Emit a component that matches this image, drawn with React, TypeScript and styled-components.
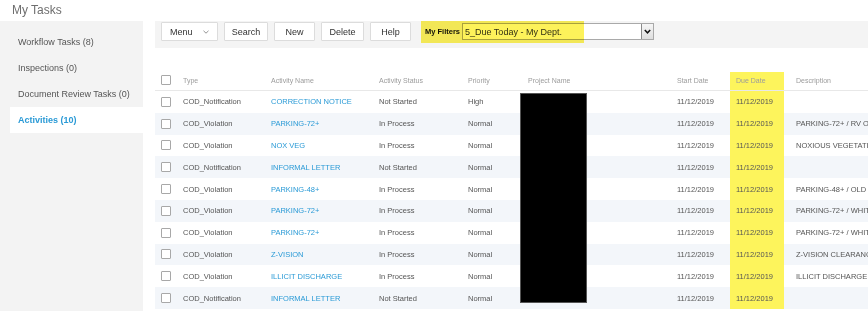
import React from "react";
import styled, { createGlobalStyle } from "styled-components";

const Global = createGlobalStyle`
  html, body { margin: 0; padding: 0; background: #fff; }
  body { font-family: "Liberation Sans", Arial, sans-serif; }
  * { box-sizing: border-box; }
`;

const Page = styled.div`
  width: 868px;
  height: 311px;
  overflow: hidden;
  display: flex;
  flex-direction: column;
`;

const Header = styled.div`
  height: 21px;
  flex: none;
  display: flex;
  align-items: center;
  padding-left: 12px;
  padding-bottom: 2px;
  font-size: 12px;
  color: #6e6e6e;
`;

const Body = styled.div`
  flex: 1;
  display: flex;
  min-height: 0;
`;

const Sidebar = styled.div`
  width: 143px;
  flex: none;
  background: #f3f3f3;
  padding-top: 8px;
  display: flex;
  flex-direction: column;
`;

const NavItem = styled.div<{ $active?: boolean }>`
  height: 26px;
  margin-left: 10px;
  padding-left: 8px;
  display: flex;
  align-items: center;
  font-size: 9px;
  color: ${(p) => (p.$active ? "#2a9ad6" : "#555")};
  font-weight: ${(p) => (p.$active ? 700 : 400)};
  background: ${(p) => (p.$active ? "#fff" : "transparent")};
`;

const Main = styled.div`
  flex: 1;
  min-width: 0;
  padding-left: 12px;
  display: flex;
  flex-direction: column;
  overflow: hidden;
`;

const Toolbar = styled.div`
  height: 27px;
  flex: none;
  background: #f4f4f4;
  display: flex;
  align-items: flex-start;
  padding: 1px 0 0 6px;
  gap: 6px;
`;

const Button = styled.button<{ $w: number }>`
  width: ${(p) => p.$w}px;
  height: 19px;
  padding: 0;
  background: #fff;
  border: 1px solid #dcdcdc;
  border-radius: 1px;
  font-family: "Liberation Sans", Arial, sans-serif;
  font-size: 9px;
  color: #333;
  display: flex;
  align-items: center;
  justify-content: center;
`;

const MenuButton = styled(Button)`
  justify-content: space-between;
  padding: 0 8px 0 8px;
`;

const FilterGroup = styled.div`
  position: relative;
  margin-left: 4px;
  margin-top: 1px;
  display: flex;
  align-items: center;
  gap: 2px;
  padding-left: 4px;
  height: 17px;
`;

const FilterLabel = styled.span`
  font-size: 7.5px;
  font-weight: 700;
  color: #111;
`;

const Select = styled.div`
  width: 192px;
  height: 17px;
  border: 1px solid #a9a9a9;
  background: #fff;
  display: flex;
  align-items: center;
  justify-content: space-between;
  padding-left: 2px;
  font-size: 9px;
  color: #333;
`;

const SelectArrow = styled.div`
  width: 12px;
  height: 15px;
  border-left: 1px solid #8a8a8a;
  background: linear-gradient(#f6f6f6, #dedede);
  display: flex;
  align-items: center;
  justify-content: center;
`;

const Highlight = styled.div`
  position: absolute;
  left: 0;
  top: -3px;
  width: 163px;
  height: 23px;
  background: #fdf25a;
  mix-blend-mode: multiply;
  pointer-events: none;
`;

const Table = styled.div`
  margin-top: 24px;
  position: relative;
  display: flex;
  flex-direction: column;
`;

const cols = "22px 88px 108px 89px 57px 152px 59px 54px 1fr";

const HeadRow = styled.div`
  display: grid;
  grid-template-columns: ${cols};
  height: 19px;
  border-bottom: 1px solid #e8e8e8;
`;

const Row = styled.div<{ $alt: boolean }>`
  display: grid;
  grid-template-columns: ${cols};
  height: 21.8px;
  background: ${(p) => (p.$alt ? "#f3f6fa" : "#fff")};
`;

const Cell = styled.div<{ $pad?: number; $hl?: boolean; $head?: boolean; $link?: boolean }>`
  display: flex;
  align-items: center;
  padding-left: ${(p) => p.$pad ?? 6}px;
  padding-bottom: ${(p) => (p.$head ? 2 : 0)}px;
  white-space: nowrap;
  overflow: hidden;
  font-size: ${(p) => (p.$head ? 7 : 7.5)}px;
  color: ${(p) => (p.$head ? "#9c9c9c" : p.$link ? "#2a9ad6" : "#555")};
  background: ${(p) => (p.$hl ? "#fdf45c" : "transparent")};
`;

const Check = styled.span`
  width: 10px;
  height: 10px;
  border: 1px solid #a8a8a8;
  border-radius: 1px;
  background: #fff;
  flex: none;
`;

const Redaction = styled.div`
  position: absolute;
  left: 365px;
  top: 21px;
  width: 67px;
  height: 210px;
  background: #000;
  border: 1px solid #555;
`;

type Item = {
  type: string;
  name: string;
  status: string;
  priority: string;
  desc: string;
};

const rows: Item[] = [
  { type: "COD_Notification", name: "CORRECTION NOTICE", status: "Not Started", priority: "High", desc: "" },
  { type: "COD_Violation", name: "PARKING-72+", status: "In Process", priority: "Normal", desc: "PARKING-72+ / RV OR TRAILER" },
  { type: "COD_Violation", name: "NOX VEG", status: "In Process", priority: "Normal", desc: "NOXIOUS VEGETATION" },
  { type: "COD_Notification", name: "INFORMAL LETTER", status: "Not Started", priority: "Normal", desc: "" },
  { type: "COD_Violation", name: "PARKING-48+", status: "In Process", priority: "Normal", desc: "PARKING-48+ / OLD VEHICLE" },
  { type: "COD_Violation", name: "PARKING-72+", status: "In Process", priority: "Normal", desc: "PARKING-72+ / WHITE VEHICLE" },
  { type: "COD_Violation", name: "PARKING-72+", status: "In Process", priority: "Normal", desc: "PARKING-72+ / WHITE VEHICLE" },
  { type: "COD_Violation", name: "Z-VISION", status: "In Process", priority: "Normal", desc: "Z-VISION CLEARANCE" },
  { type: "COD_Violation", name: "ILLICIT DISCHARGE", status: "In Process", priority: "Normal", desc: "ILLICIT DISCHARGE" },
  { type: "COD_Notification", name: "INFORMAL LETTER", status: "Not Started", priority: "Normal", desc: "" },
];

const nav = ["Workflow Tasks (8)", "Inspections (0)", "Document Review Tasks (0)", "Activities (10)"];

export default function App() {
  return (
    <Page>
      <Global />
      <Header>My Tasks</Header>
      <Body>
        <Sidebar>
          {nav.map((n, i) => (
            <NavItem key={n} $active={i === 3}>
              {n}
            </NavItem>
          ))}
        </Sidebar>
        <Main>
          <Toolbar>
            <MenuButton $w={57}>
              <span>Menu</span>
              <svg width="6" height="4" viewBox="0 0 6 4">
                <polyline points="0.5,0.8 3,3.2 5.5,0.8" fill="none" stroke="#888" strokeWidth="0.9" />
              </svg>
            </MenuButton>
            <Button $w={44}>Search</Button>
            <Button $w={41}>New</Button>
            <Button $w={43}>Delete</Button>
            <Button $w={41}>Help</Button>
            <FilterGroup>
              <FilterLabel>My Filters</FilterLabel>
              <Select>
                <span>5_Due Today - My Dept.</span>
                <SelectArrow>
                  <svg width="7" height="5" viewBox="0 0 7 5">
                    <polyline points="0.8,1 3.5,3.8 6.2,1" fill="none" stroke="#111" strokeWidth="1.5" />
                  </svg>
                </SelectArrow>
              </Select>
              <Highlight />
            </FilterGroup>
          </Toolbar>
          <Table>
            <HeadRow>
              <Cell $head>
                <Check />
              </Cell>
              <Cell $head>Type</Cell>
              <Cell $head>Activity Name</Cell>
              <Cell $head>Activity Status</Cell>
              <Cell $head>Priority</Cell>
              <Cell $head $pad={9}>Project Name</Cell>
              <Cell $head>Start Date</Cell>
              <Cell $head $hl>Due Date</Cell>
              <Cell $head $pad={12}>Description</Cell>
            </HeadRow>
            {rows.map((r, i) => (
              <Row key={i} $alt={i % 2 === 1}>
                <Cell>
                  <Check />
                </Cell>
                <Cell>{r.type}</Cell>
                <Cell $link>{r.name}</Cell>
                <Cell>{r.status}</Cell>
                <Cell>{r.priority}</Cell>
                <Cell $pad={9}></Cell>
                <Cell>11/12/2019</Cell>
                <Cell $hl>11/12/2019</Cell>
                <Cell $pad={12}>{r.desc}</Cell>
              </Row>
            ))}
            <Redaction />
          </Table>
        </Main>
      </Body>
    </Page>
  );
}
